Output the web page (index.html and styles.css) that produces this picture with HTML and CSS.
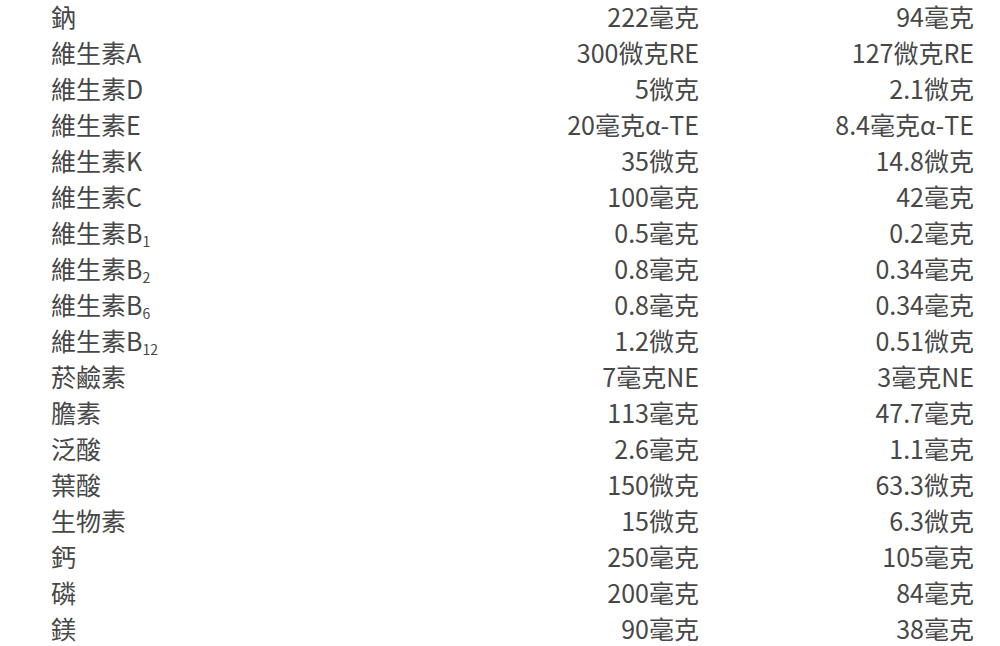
FILE: index.html
```html
<!DOCTYPE html>
<html lang="zh-Hant">
<head>
<meta charset="utf-8">
<link rel="stylesheet" href="styles.css">
</head>
<body>
<table class="nutri">
<tbody>
<tr><td class="name">鈉</td><td class="v1">222毫克</td><td class="v2">94毫克</td></tr>
<tr><td class="name">維生素A</td><td class="v1">300微克RE</td><td class="v2">127微克RE</td></tr>
<tr><td class="name">維生素D</td><td class="v1">5微克</td><td class="v2">2.1微克</td></tr>
<tr><td class="name">維生素E</td><td class="v1">20毫克α-TE</td><td class="v2">8.4毫克α-TE</td></tr>
<tr><td class="name">維生素K</td><td class="v1">35微克</td><td class="v2">14.8微克</td></tr>
<tr><td class="name">維生素C</td><td class="v1">100毫克</td><td class="v2">42毫克</td></tr>
<tr><td class="name">維生素B<sub>1</sub></td><td class="v1">0.5毫克</td><td class="v2">0.2毫克</td></tr>
<tr><td class="name">維生素B<sub>2</sub></td><td class="v1">0.8毫克</td><td class="v2">0.34毫克</td></tr>
<tr><td class="name">維生素B<sub>6</sub></td><td class="v1">0.8毫克</td><td class="v2">0.34毫克</td></tr>
<tr><td class="name">維生素B<sub>12</sub></td><td class="v1">1.2微克</td><td class="v2">0.51微克</td></tr>
<tr><td class="name">菸鹼素</td><td class="v1">7毫克NE</td><td class="v2">3毫克NE</td></tr>
<tr><td class="name">膽素</td><td class="v1">113毫克</td><td class="v2">47.7毫克</td></tr>
<tr><td class="name">泛酸</td><td class="v1">2.6毫克</td><td class="v2">1.1毫克</td></tr>
<tr><td class="name">葉酸</td><td class="v1">150微克</td><td class="v2">63.3微克</td></tr>
<tr><td class="name">生物素</td><td class="v1">15微克</td><td class="v2">6.3微克</td></tr>
<tr><td class="name">鈣</td><td class="v1">250毫克</td><td class="v2">105毫克</td></tr>
<tr><td class="name">磷</td><td class="v1">200毫克</td><td class="v2">84毫克</td></tr>
<tr><td class="name">鎂</td><td class="v1">90毫克</td><td class="v2">38毫克</td></tr>
</tbody>
</table>
</body>
</html>
```
FILE: styles.css
```css
html, body {
  margin: 0;
  padding: 0;
  background: #fff;
}
body {
  font-family: "Noto Sans CJK TC", "Noto Sans", sans-serif;
  font-size: 25px;
  font-weight: 400;
  color: #474747;
}
.nutri {
  border-collapse: collapse;
  margin-top: -2px;
  margin-left: 51px;
  width: 923px;
}
.nutri td {
  padding: 0;
  height: 36px;
  line-height: 36px;
  white-space: nowrap;
  vertical-align: middle;
}
.name {
  text-align: left;
  width: 400px;
}
.v1 {
  text-align: right;
  width: 248px;
}
.v2 {
  text-align: right;
}
sub {
  font-size: 14px;
  line-height: 0;
  vertical-align: -4px;
}
```
